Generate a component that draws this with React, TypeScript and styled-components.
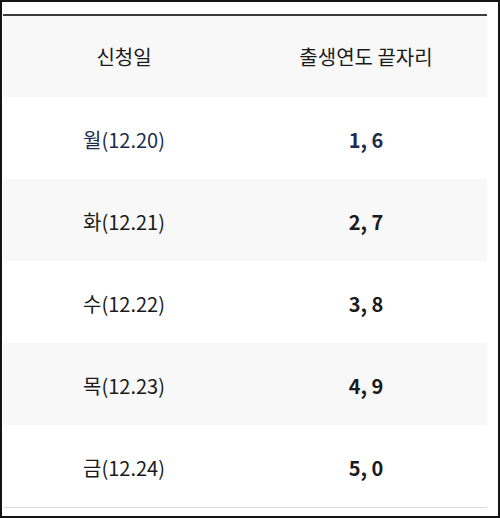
import styled, { createGlobalStyle } from "styled-components";
import React from "react";

const GlobalStyle = createGlobalStyle`
  html, body {
    margin: 0;
    padding: 0;
    background: #ffffff;
  }
  * {
    box-sizing: border-box;
  }
`;

const rows = [
  { day: "월(12.20)", digits: "1, 6", active: true },
  { day: "화(12.21)", digits: "2, 7" },
  { day: "수(12.22)", digits: "3, 8" },
  { day: "목(12.23)", digits: "4, 9" },
  { day: "금(12.24)", digits: "5, 0" },
];

const App = () => {
  return (
    <Frame>
      <GlobalStyle />
      <Table>
        <HeadRow>
          <Cell>신청일</Cell>
          <Cell>출생연도 끝자리</Cell>
        </HeadRow>
        {rows.map((row, index) => (
          <Row key={row.day} $shaded={index % 2 === 1}>
            <Cell $active={row.active}>{row.day}</Cell>
            <Cell $active={row.active} $bold>
              {row.digits}
            </Cell>
          </Row>
        ))}
      </Table>
    </Frame>
  );
};

export default App;

const Frame = styled.div`
  width: 500px;
  height: 518px;
  border: 2px solid #141414;
  padding: 12px 11px 0 1px;
  background: #ffffff;
  font-family: "Noto Sans CJK KR", "Noto Sans", sans-serif;
`;

const Table = styled.div`
  display: flex;
  flex-direction: column;
  border-top: 2px solid #3c3c3c;
  border-bottom: 1px solid #dcdcdc;
`;

const Row = styled.div<{ $shaded?: boolean }>`
  display: grid;
  grid-template-columns: 1fr 1fr;
  height: 82px;
  padding-top: 3px;
  background: ${(p) => (p.$shaded ? "#f8f8f8" : "#ffffff")};
`;

const HeadRow = styled(Row)`
  height: 81px;
  padding-top: 0;
  background: #f8f8f8;
`;

const Cell = styled.div<{ $active?: boolean; $bold?: boolean }>`
  display: flex;
  align-items: center;
  justify-content: center;
  font-size: 20px;
  font-weight: ${(p) => (p.$bold ? 700 : 400)};
  color: ${(p) => (p.$active ? "#1b2d4b" : "#1a1a1a")};
`;
